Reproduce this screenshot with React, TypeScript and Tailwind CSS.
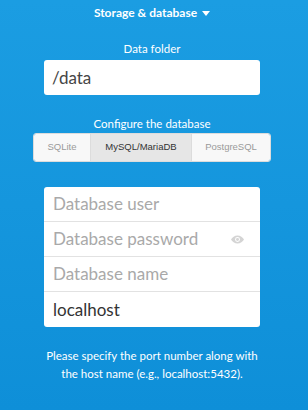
import React from "react";

const font = { fontFamily: 'Lato, "Noto Sans", sans-serif' };

export default function App() {
  return (
    <div className="w-[308px] h-[410px] overflow-hidden bg-gradient-to-b from-[#1b9de2] to-[#0e8fd8] text-white" style={font}>
      <div className="w-[304px] flex flex-col items-center">
        <div className="mt-[4px] h-[18px] flex items-center gap-[5px] text-[12px] font-bold">
          <span>Storage &amp; database</span>
          <svg width="8" height="5" viewBox="0 0 8 5">
            <path d="M0 0h8L4 5z" fill="#fff" />
          </svg>
        </div>
        <div className="mt-[18px] text-[11.5px] leading-[18px]">Data folder</div>
        <div className="mt-[2px] w-[216px] h-[35px] bg-white rounded-[3px] flex items-center px-[8px] text-[17px] text-[#454545]">
          /data
        </div>
        <div className="mt-[22px] text-[11.5px] leading-[14px]">Configure the database</div>
        <div
          className="mt-[2px] w-[238px] h-[29px] flex rounded-[3px] overflow-hidden border border-[#dcdcdc] text-[9.5px]"
          style={{ fontFamily: '"Liberation Sans", Arial, sans-serif' }}
        >
          <div className="w-[57px] bg-[#f8f8f8] text-[#9a9a9a] flex items-center justify-center border-r border-[#dcdcdc]">
            SQLite
          </div>
          <div className="w-[101px] bg-[#e6e6e6] text-[#333] flex items-center justify-center border-r border-[#dcdcdc]">
            MySQL/MariaDB
          </div>
          <div className="flex-1 bg-[#f8f8f8] text-[#9a9a9a] flex items-center justify-center">
            PostgreSQL
          </div>
        </div>
        <div className="mt-[25px] w-[216px] bg-white rounded-[3px] flex flex-col text-[17px]">
          <div className="h-[35px] flex items-center px-[9px] text-[#a9a9a9] border-b border-[#e2e2e2]">
            Database user
          </div>
          <div className="h-[35px] flex items-center px-[9px] text-[#a9a9a9] border-b border-[#e2e2e2]">
            <span className="flex-1">Database password</span>
            <svg width="13" height="9" viewBox="0 0 16 10" className="mr-[7px]">
              <path d="M8 0C4.5 0 1.5 2.5 0 5c1.5 2.5 4.5 5 8 5s6.5-2.5 8-5C14.5 2.5 11.5 0 8 0z" fill="#d4d4d4" />
              <circle cx="8" cy="5" r="3" fill="#fff" />
              <circle cx="8" cy="5" r="1.8" fill="#d4d4d4" />
            </svg>
          </div>
          <div className="h-[35px] flex items-center px-[9px] text-[#a9a9a9] border-b border-[#e2e2e2]">
            Database name
          </div>
          <div className="h-[35px] flex items-center px-[9px] text-[#333]">localhost</div>
        </div>
        <div className="mt-[20px] w-[230px] text-center text-[11.5px] leading-[18px]">
          Please specify the port number along with the host name (e.g., localhost:5432).
        </div>
      </div>
    </div>
  );
}
